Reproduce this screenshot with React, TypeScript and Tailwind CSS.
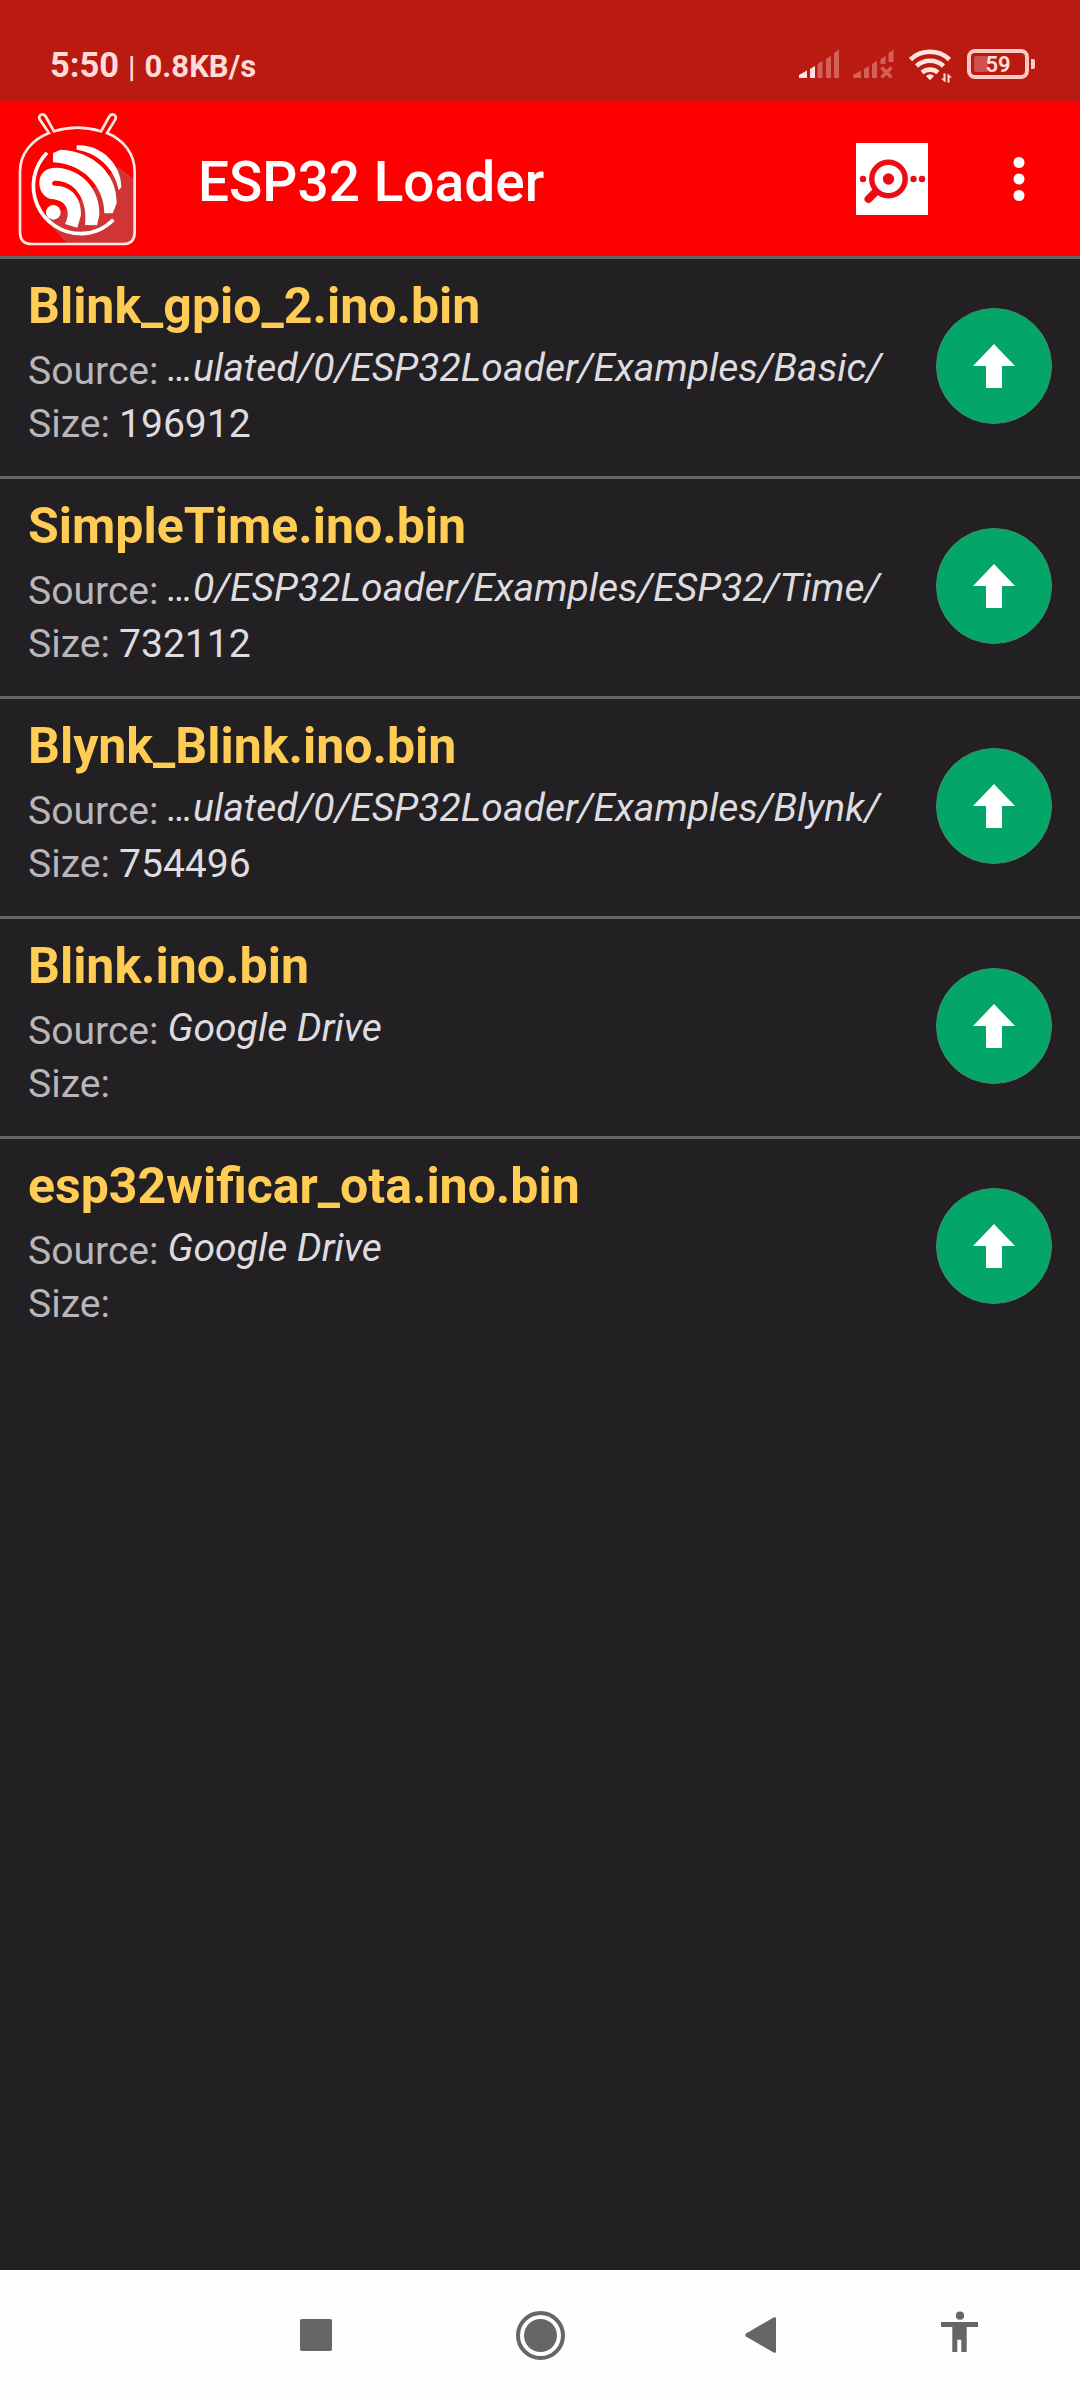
type FirmwareFile = {
  name: string;
  source: string;
  size: string;
};

const files: FirmwareFile[] = [
  { name: "Blink_gpio_2.ino.bin", source: "…ulated/0/ESP32Loader/Examples/Basic/", size: "196912" },
  { name: "SimpleTime.ino.bin", source: "…0/ESP32Loader/Examples/ESP32/Time/", size: "732112" },
  { name: "Blynk_Blink.ino.bin", source: "…ulated/0/ESP32Loader/Examples/Blynk/", size: "754496" },
  { name: "Blink.ino.bin", source: "Google Drive", size: "" },
  { name: "esp32wificar_ota.ino.bin", source: "Google Drive", size: "" },
];

function SignalIcon() {
  return (
    <svg width="41" height="30" viewBox="0 0 41 30" className="fill-[#ffe3df]">
      <path d="M0 29v-3l8-4.500V29z" />
      <path d="M11 29v-9l5-3v12z" />
      <path d="M18.500 29V15l5-3v17zM27 29V10l5-3v22zM35 29V4l5-3.500V29z" className="opacity-35" />
    </svg>
  );
}

function NoSignalIcon() {
  return (
    <svg width="41" height="30" viewBox="0 0 41 30" className="fill-[#ffe3df] opacity-35">
      <path d="M0 29v-3l8-4.500V29zM11 29v-9l5-3v12zM19 29V15l5-3v17zM27.500 15V10l5-3v8zM35.500 13V4l5-3.500V13z" />
      <path d="m28.500 18.500 10 10m0-10-10 10" className="stroke-[#ffe3df] stroke-[3.500]" />
    </svg>
  );
}

function WifiIcon() {
  return (
    <svg width="43" height="34" viewBox="0 0 43 34" fill="none" className="stroke-[#ffe3df] stroke-[4.600]">
      <path d="M1.500 10.500a28.500 28.500 0 0 1 39 0" />
      <path d="M7.500 17a20 20 0 0 1 27 0" />
      <path d="M13 23.500a12.500 12.500 0 0 1 16 0" />
      <path d="M17 27q4-3.500 8 0l-4 4.200z" className="fill-[#ffe3df] stroke-none" />
      <path d="M36.500 24.500v9l-4.500-4h2.500v-5zM38.500 33.500v-9l4.500 4h-2.500v5z" className="fill-[#ffe3df] stroke-none" />
    </svg>
  );
}

function Battery({ level }: { level: number }) {
  return (
    <div className="flex items-center gap-[2px]">
      <div className="relative flex h-[30px] w-[62px] items-center justify-center rounded-[8px] border-4 border-[#ffcbc6]">
        <div className="absolute top-[3px] left-[3px] h-[16px] w-[14px] rounded-[2px] bg-[#d0504c]" />
        <span className="relative pt-[2px] text-[22px] leading-none font-semibold text-[#ffe3df]">{level}</span>
      </div>
      <div className="h-[10px] w-1 rounded-r-[2px] bg-[#ffcbc6]" />
    </div>
  );
}

function StatusBar() {
  return (
    <div className="flex h-[102px] items-start justify-between bg-[#bb1a10] pr-[45px] pl-[50px]">
      <div className="mt-[45px] flex items-baseline leading-10 font-bold text-[#ffdcd8]">
        <span className="text-[34.500px]">5:50</span>
        <span className="ml-[9px] text-[30px] font-medium">|</span>
        <span className="ml-[9px] text-[31px]">0.8KB/s</span>
      </div>
      <div className="mt-[49px] flex items-start">
        <SignalIcon />
        <div className="ml-[13px]">
          <NoSignalIcon />
        </div>
        <div className="ml-[15px]">
          <WifiIcon />
        </div>
        <div className="ml-[15px]">
          <Battery level={59} />
        </div>
      </div>
    </div>
  );
}

function AppLogo() {
  return (
    <svg width="120" height="134" viewBox="54 36 360 402" fill="none">
      {/* long shadow */}
      <path d="M355 200 404 240V395Q404 432 370 432H202L140 362 240 300z" fill="#d03434" />
      <path
        d="M60 215C60 160 96 119 147 99L119 58C113 45 130 37 138 51L162 94Q232 72 303 94L327 51C335 37 352 45 346 58L321 99C370 119 404 160 404 215V395Q404 432 370 432H95Q60 432 60 395z"
        stroke="#ffe9e7"
        strokeWidth="8"
      />
      <path d="M141 158A143 143 0 0 0 243 401Q300 400 340 359" stroke="#fff" strokeWidth="11" />
      <path d="M230 136C305 132 365 195 364 262L356 271C345 205 292 158 230 149z" fill="#fff" />
      <path d="M159 159 182 149C280 153 352 222 350 310L338 340H313C312 258 250 192 159 187z" fill="#fff" />
      <path
        d="M153 297C130 292 118 270 118 248 118 220 138 203 168 203 245 205 302 270 298 345L291 376 255 375C265 300 225 240 163 242 154 244 154 256 163 257 215 256 245 295 243 345L232 383 195 372C212 340 205 300 153 297z"
        fill="#fff"
      />
      <circle cx="160" cy="337" r="22" fill="#fff" />
    </svg>
  );
}

function MonitorIcon() {
  return (
    <svg width="72" height="72" viewBox="0 0 72 72" className="bg-white fill-[#ec0d14]">
      <circle cx="32.500" cy="36" r="16.700" fill="none" stroke="#ec0d14" strokeWidth="5.400" />
      <circle cx="32.500" cy="36" r="5.700" />
      <circle cx="7" cy="36" r="3.200" />
      <circle cx="57.500" cy="36" r="3.200" />
      <circle cx="66" cy="36" r="3.200" />
      <path d="M19.500 49 12.500 56" stroke="#ec0d14" strokeWidth="8" strokeLinecap="round" />
    </svg>
  );
}

function AppBar() {
  return (
    <header className="flex h-[154px] items-center bg-[#ff0000] pr-[55px] pl-[18px]">
      <AppLogo />
      <h1 className="ml-[60px] flex-1 pt-[7px] text-[55px] font-medium text-white">ESP32 Loader</h1>
      <MonitorIcon />
      <svg width="12" height="46" viewBox="0 0 12 46" className="ml-[85px] fill-white">
        <circle cx="6" cy="6.500" r="5.500" />
        <circle cx="6" cy="23" r="5.500" />
        <circle cx="6" cy="39.500" r="5.500" />
      </svg>
    </header>
  );
}

function FileRow({ file }: { file: FirmwareFile }) {
  return (
    <li className="flex h-[220px] items-start justify-between border-t-3 border-[#686568] pr-7 pl-7">
      <div className="pt-[18px]">
        <h2 className="text-[50px] leading-[58px] font-bold text-[#ffcc55]">{file.name}</h2>
        <div className="mt-[7px] flex text-[39.100px] leading-[53px] whitespace-nowrap text-[#dfdce0]">
          <span className="mt-[3px] text-[#b9b6ba]">Source:</span>
          <span className="ml-[9px] italic">{file.source}</span>
        </div>
        <div className="flex text-[39.100px] leading-[53px] text-[#dfdce0]">
          <span className="text-[#b9b6ba]">Size:</span>
          <span className="ml-[9px]">{file.size}</span>
        </div>
      </div>
      <button type="button" className="mt-[49px] flex size-[116px] items-center justify-center rounded-full border border-[#3f8f68] bg-[#04a568]">
        <svg width="44" height="44" viewBox="0 0 44 44" className="fill-white">
          <path d="M22 0 43 22H30v22H14V22H1z" />
        </svg>
      </button>
    </li>
  );
}

function NavBar() {
  return (
    <nav className="flex h-[130px] items-center bg-[#fefefe] pl-[300px] text-[#676567]">
      <div className="size-8 rounded-[2px] bg-current" />
      <svg width="50" height="50" viewBox="0 0 50 50" className="ml-[183px] fill-current">
        <circle cx="25.500" cy="25.500" r="22.500" fill="none" stroke="currentColor" strokeWidth="4" />
        <circle cx="25.500" cy="25.500" r="16.500" />
      </svg>
      <svg width="32" height="38" viewBox="0 0 32 38" className="ml-[180px] fill-current">
        <path d="M1 17.500 28.500 1.500q2.500-1 2.500 1v33q0 2-2.500 1L1 20.500q-1.500-1.500 0-3z" />
      </svg>
      <svg width="38" height="48" viewBox="0 0 38 48" className="ml-[164px] fill-current">
        <circle cx="19" cy="4.700" r="4.100" />
        <path d="M0 11h37v5H25.700v25h-5.400V28.700h-4V41h-5V16H0z" />
      </svg>
    </nav>
  );
}

export default function App() {
  return (
    <div className="flex h-[2400px] w-[1080px] flex-col overflow-hidden bg-[#222022] font-[Roboto,sans-serif]">
      <StatusBar />
      <AppBar />
      <ul className="flex-1">
        {files.map((file) => (
          <FileRow key={file.name} file={file} />
        ))}
      </ul>
      <NavBar />
    </div>
  );
}
